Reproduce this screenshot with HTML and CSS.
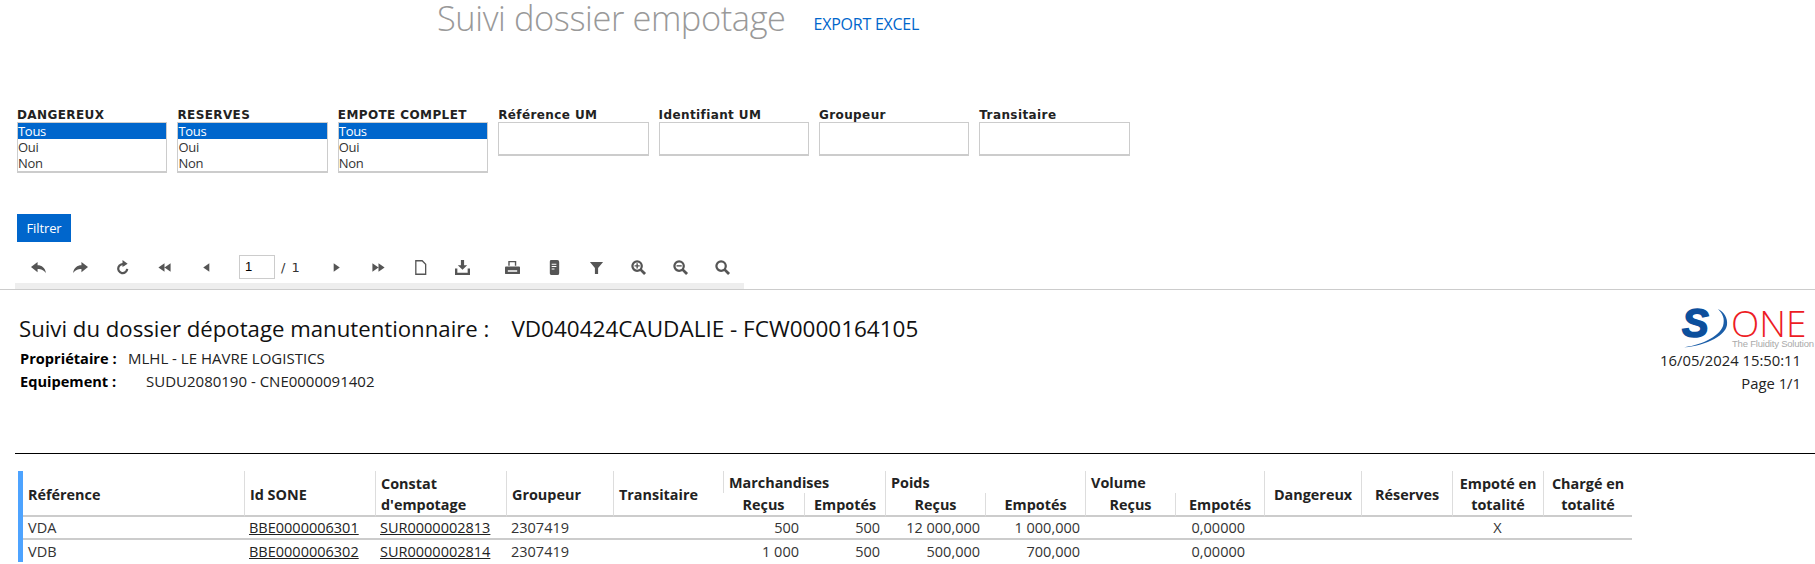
FILE: index.html
```html
<!DOCTYPE html>
<html lang="fr">
<head>
<meta charset="utf-8">
<title>Suivi dossier empotage</title>
<link rel="stylesheet" href="styles.css">
</head>
<body>
<header class="page-head">
  <h1 class="page-title">Suivi dossier empotage</h1>
  <a class="export" href="#">EXPORT EXCEL</a>
</header>

<section class="filters">
  <div class="field"><label class="lab">DANGEREUX</label>
    <div class="list"><div class="opt sel">Tous</div><div class="opt">Oui</div><div class="opt">Non</div></div></div>
  <div class="field"><label class="lab">RESERVES</label>
    <div class="list"><div class="opt sel">Tous</div><div class="opt">Oui</div><div class="opt">Non</div></div></div>
  <div class="field"><label class="lab">EMPOTE COMPLET</label>
    <div class="list"><div class="opt sel">Tous</div><div class="opt">Oui</div><div class="opt">Non</div></div></div>
  <div class="field"><label class="lab">Référence UM</label><div class="box"></div></div>
  <div class="field"><label class="lab">Identifiant UM</label><div class="box"></div></div>
  <div class="field"><label class="lab">Groupeur</label><div class="box"></div></div>
  <div class="field"><label class="lab">Transitaire</label><div class="box"></div></div>
</section>

<div class="btn-row"><button class="btn">Filtrer</button></div>

<nav class="toolbar">
  <span class="tool"><svg viewBox="0 0 16 16"><path d="M0 7.500 7 2v3.500c4.500 0 8 2.500 9 8.500-2.500-3.500-5-4.500-9-4.500V13z"/></svg></span>
  <span class="tool"><svg viewBox="0 0 16 16"><path d="M16 7.500 9 2v3.500c-4.500 0-8 2.500-9 8.500 2.500-3.500 5-4.500 9-4.500V13z"/></svg></span>
  <span class="tool"><svg viewBox="0 0 16 16"><path class="ln" d="M10.500 5A4.800 4.800 0 1 0 13 9.500"/><path d="M8 0 13.500 4 8 7.500z"/></svg></span>
  <span class="tool"><svg viewBox="0 0 16 16"><path d="M8 3.500v9L1.500 8zM14.500 3.500v9L8 8z"/></svg></span>
  <span class="tool"><svg viewBox="0 0 16 16"><path d="M11 3.500v9L4.500 8z"/></svg></span>
  <span class="pager"><span class="pg-input">1</span><span class="pg-total">/ 1</span></span>
  <span class="tool"><svg viewBox="0 0 16 16"><path d="M5 3.500v9L11.500 8z"/></svg></span>
  <span class="tool"><svg viewBox="0 0 16 16"><path d="M1.500 3.500v9L8 8zM8 3.500v9L14.500 8z"/></svg></span>
  <span class="tool"><svg viewBox="0 0 16 16"><path class="ln thin" d="M3 .800h6.800L13.500 4.500V15.200H3z"/></svg></span>
  <span class="tool tool-gap"><svg viewBox="0 0 16 16"><path d="M6.300 0h3.400v5.500H13L8 10.500 3 5.500h3.300zM0 9h2.500v4.500h11V9H16v7H0z"/></svg></span>
  <span class="tool"><svg viewBox="0 0 16 16"><path d="M3.500 1H12v5H3.500zM5 2.300V6h5.500V2.300zM1 7h14q1 0 1 1v6q0 1-1 1H1q-1 0-1-1V8q0-1 1-1zm2 4v1.500h10V11z" fill-rule="evenodd"/></svg></span>
  <span class="tool"><svg viewBox="0 0 16 16"><path d="M3 1.500Q3 0 4.500 0H11q2 0 2 2v12q0 2-2 2H4.500Q3 16 3 14.500zM5 4v1h5V4zM5 6.500v1h5v-1zM5 9v1h3V9z" fill-rule="evenodd"/></svg></span>
  <span class="tool"><svg viewBox="0 0 16 16"><path d="M1 2h14L9.700 8.500V15H6.300V8.500z"/></svg></span>
  <span class="tool"><svg viewBox="0 0 16 16"><circle class="ln" cx="6.500" cy="6.500" r="5"/><path class="ln wide" d="m10 10 5 5"/><path d="M3.800 5.500h2v-2h1.500v2h2V7h-2v2H5.800V7h-2z"/></svg></span>
  <span class="tool"><svg viewBox="0 0 16 16"><circle class="ln" cx="6.500" cy="6.500" r="5"/><path class="ln wide" d="m10 10 5 5"/><path d="M3.800 5.500h5.500V7H3.800z"/></svg></span>
  <span class="tool"><svg viewBox="0 0 16 16"><circle class="ln" cx="6.500" cy="6.500" r="5"/><path class="ln wide" d="m10 10 5 5"/></svg></span>
</nav>
<div class="toolbar-rule"><div class="toolbar-shade"></div></div>

<section class="report-head">
  <div class="report-left">
    <h2 class="report-title"><span>Suivi du dossier dépotage manutentionnaire :</span><span class="report-code">VD040424CAUDALIE - FCW0000164105</span></h2>
    <div class="meta meta-a"><b>Propriétaire :</b><span>MLHL - LE HAVRE LOGISTICS</span></div>
    <div class="meta meta-b"><b>Equipement :</b><span>SUDU2080190 - CNE0000091402</span></div>
  </div>
  <div class="report-right">
    <svg class="logo" viewBox="0 0 125 40">
      <path class="arc" d="M-1 38.500C20 38 43 28 45 16 46 9 42 3 36 0 41 5 43 10 41 17 37 28 18 37-1 38.500z"/>
      <text class="logo-s" x="0" y="28">S</text>
      <text class="logo-one" x="49" y="28">ONE</text>
      <text class="logo-sub" x="50" y="38">The Fluidity Solution</text>
    </svg>
    <div class="stamp">16/05/2024 15:50:11</div>
    <div class="stamp">Page 1/1</div>
  </div>
</section>
<hr class="black-rule">

<table class="grid">
  <colgroup>
    <col class="c221"><col class="c131"><col class="c131"><col class="c107"><col class="c110">
    <col class="c81"><col class="c81"><col class="c100"><col class="c100"><col class="c90"><col class="c89">
    <col class="c97"><col class="c91"><col class="c91"><col class="c89">
  </colgroup>
  <thead>
    <tr class="h1">
      <th rowspan="2">Référence</th><th rowspan="2">Id SONE</th><th rowspan="2">Constat d'empotage</th>
      <th rowspan="2">Groupeur</th><th rowspan="2">Transitaire</th>
      <th colspan="2" class="grp">Marchandises</th><th colspan="2" class="grp">Poids</th><th colspan="2" class="grp">Volume</th>
      <th rowspan="2" class="ctr">Dangereux</th><th rowspan="2" class="ctr">Réserves</th>
      <th rowspan="2" class="ctr">Empoté en totalité</th><th rowspan="2" class="ctr">Chargé en totalité</th>
    </tr>
    <tr class="h2">
      <th>Reçus</th><th>Empotés</th><th>Reçus</th><th>Empotés</th><th>Reçus</th><th>Empotés</th>
    </tr>
  </thead>
  <tbody>
    <tr>
      <td>VDA</td><td><a href="#">BBE0000006301</a></td><td><a href="#">SUR0000002813</a></td><td>2307419</td><td></td>
      <td class="num">500</td><td class="num">500</td><td class="num">12 000,000</td><td class="num">1 000,000</td><td></td><td class="num vol">0,00000</td>
      <td></td><td></td><td class="ctr">X</td><td></td>
    </tr>
    <tr>
      <td>VDB</td><td><a href="#">BBE0000006302</a></td><td><a href="#">SUR0000002814</a></td><td>2307419</td><td></td>
      <td class="num">1 000</td><td class="num">500</td><td class="num">500,000</td><td class="num">700,000</td><td></td><td class="num vol">0,00000</td>
      <td></td><td></td><td></td><td></td>
    </tr>
  </tbody>
</table>
</body>
</html>
```

FILE: styles.css
```css
* { box-sizing: border-box; }
html, body { margin: 0; padding: 0; }
body { width: 1815px; height: 564px; overflow: hidden; background: #fff; font-family: "Open Sans", sans-serif; color: #222; }

.page-head { display: flex; align-items: flex-start; height: 40px; padding-left: 437px; }
.page-title { margin: 0; font-weight: 300; font-size: 34.400px; line-height: 36px; color: #999; letter-spacing: -.4px; white-space: nowrap; }
.export { margin: 13px 0 0 28px; font-size: 16px; line-height: 22px; color: #06c; text-decoration: none; letter-spacing: -.25px; white-space: nowrap; }

.filters { display: flex; gap: 10px; padding: 68px 0 0 17px; }
.field { width: 150.400px; }
.lab { display: block; height: 14px; font: bold 12px/14px "DejaVu Sans", sans-serif; color: #222; letter-spacing: .4px; white-space: nowrap; }
.list { height: 51px; border: 1px solid #ccc; border-bottom-width: 2px; }
.opt { height: 16px; font: 13px/16px "Open Sans", sans-serif; color: #333; letter-spacing: -.3px; }
.opt.sel { background: #06c; color: #fff; }
.box { height: 34px; border: 1px solid #ccc; border-bottom-width: 2px; }

.btn-row { padding: 41px 0 0 17px; height: 79px; }
.btn { display: block; width: 54px; height: 28px; padding: 0; border: 0; background: #06c; color: #fff; font: 13px "Open Sans", sans-serif; letter-spacing: -.1px; }

.toolbar { display: flex; align-items: center; height: 32px; padding-left: 17px; margin-top: -1px; }
.tool { flex: none; display: flex; justify-content: center; width: 42px; }
.tool-gap { margin-right: 8px; }
.tool svg { width: 15px; height: 15px; fill: #555; overflow: visible; }
.ln { fill: none; stroke: #555; stroke-width: 2.400; }
.ln.thin { stroke-width: 1.400; }
.ln.wide { stroke-width: 3; }
.pager { flex: none; display: flex; align-items: center; width: 88px; padding-left: 12px; }
.pg-input { width: 36px; height: 24px; border: 1px solid #ccc; font: 13px/22px "Liberation Sans", sans-serif; color: #000; padding-left: 5px; }
.pg-total { margin-left: 6px; font: 13px "DejaVu Sans", sans-serif; color: #333; word-spacing: 2px; }

.toolbar-rule { height: 7px; border-bottom: 1px solid #ccc; }
.toolbar-shade { width: 729px; height: 6px; margin-left: 15px; background: #eee; }

.report-head { display: flex; justify-content: space-between; height: 163px; }
.report-left { padding: 24px 0 0 19px; }
.report-title { display: flex; gap: 22px; margin: 0; font-weight: 400; font-size: 22.200px; line-height: 30px; color: #111; }
.report-code { font-size: 22.500px; }
.meta { display: flex; font-size: 15px; line-height: 23px; color: #222; }
.meta b { color: #000; margin-left: 1px; font-size: 14.600px; }
.meta-a { margin-top: 3px; }
.meta-a b { width: 108px; }
.meta-b b { width: 126px; }
.report-right { display: flex; flex-direction: column; align-items: flex-end; padding: 19px 14px 0 0; }
.logo { width: 125px; height: 40px; margin-right: -6px; overflow: visible; }
.arc { fill: #1b5ea8; }
.logo-s { font: italic bold 40px "Liberation Sans", sans-serif; fill: #0c4f9c; stroke: #0c4f9c; stroke-width: 1.500; }
.logo-one { font: 300 37px "Open Sans", sans-serif; fill: #ed1c24; }
.logo-sub { font: 9.500px "Liberation Sans", sans-serif; fill: #aaa; letter-spacing: -.2px; }
.stamp { font-size: 14.800px; line-height: 23px; color: #222; white-space: nowrap; }

.black-rule { height: 1px; margin: 0 0 0 15px; border: 0; background: #000; }

.grid { margin: 17px 0 0 18px; border-collapse: separate; border-spacing: 0; table-layout: fixed; width: 1614px; border-left: 5px solid #4da3ff; font-size: 14.500px; }
.c221 { width: 221px; } .c131 { width: 131px; } .c107 { width: 107px; } .c110 { width: 110px; }
.c81 { width: 81px; } .c100 { width: 100px; } .c90 { width: 90px; } .c89 { width: 89px; }
.c97 { width: 97px; } .c91 { width: 91px; }
.grid th { padding: 2px 5px 0; font-weight: 700; font-size: 14.400px; line-height: 21px; text-align: left; color: #222; border-left: 1px solid #ddd; border-bottom: 2px solid #ccc; }
.grid th:first-child { border-left: 0; }
.h1 { height: 22px; }
.h2 { height: 23px; }
.h2 th { text-align: center; }
.grid .h1 .grp { border-bottom: 0; padding-top: 2px; line-height: 20px; }
.grid .h2 th { padding: 1px 0 0; line-height: 20px; }
.grid .ctr { text-align: center; }
.grid td { height: 23px; padding: 0 5px; line-height: 21px; color: #333; white-space: nowrap; border-bottom: 2px solid #ccc; }
.grid tr:last-child td { border-bottom: 0; height: 22px; }
.grid a { color: #222; }
.grid .num { text-align: right; }
.grid .vol { padding-right: 19px; }
```
